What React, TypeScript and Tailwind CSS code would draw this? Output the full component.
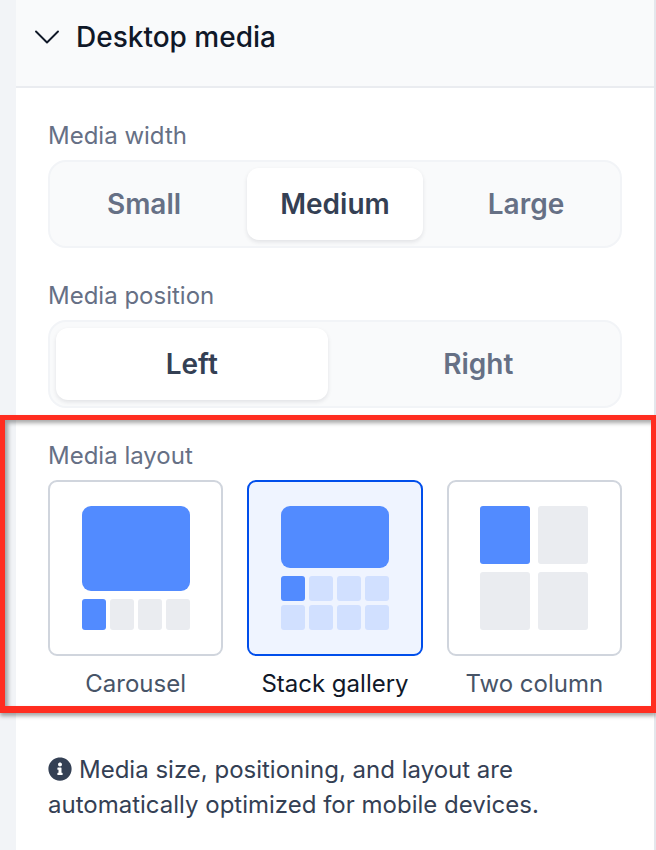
import { ChevronDown } from "lucide-react";
import { FaInfoCircle } from "react-icons/fa";

function Segmented({ options, active }: { options: string[]; active: string }) {
  return (
    <div className="flex h-[88px] gap-[15px] rounded-[18px] border-2 border-[#f2f4f7] bg-[#f9fafb] p-[6px]">
      {options.map((option) => (
        <div
          key={option}
          className={
            option === active
              ? "flex flex-1 items-center justify-center rounded-[12px] bg-white text-[28px] font-semibold text-[#344054] shadow-[0_2px_4px_rgba(16,24,40,0.1)]"
              : "flex flex-1 items-center justify-center text-[28px] font-semibold text-[#667085]"
          }
        >
          {option}
        </div>
      ))}
    </div>
  );
}

function Label({ children }: { children: React.ReactNode }) {
  return <div className="mb-2 h-8 text-[24px] leading-8 text-[#667085]">{children}</div>;
}

function Thumbs({ count, light, className }: { count: number; light: boolean; className: string }) {
  return (
    <div className={`grid grid-cols-4 gap-1 ${className}`}>
      {Array.from({ length: count }).map((_, i) => (
        <div
          key={i}
          className={
            i === 0
              ? "rounded-[3px] bg-[#528bff]"
              : light
                ? "rounded-[3px] bg-[#d1e0ff]"
                : "rounded-[3px] bg-[#eaecf0]"
          }
        />
      ))}
    </div>
  );
}

function LayoutCard({
  title,
  selected,
  children,
}: {
  title: string;
  selected?: boolean;
  children: React.ReactNode;
}) {
  return (
    <div className="flex flex-col items-center">
      <div
        className={
          selected
            ? "flex h-[176px] w-full items-center justify-center rounded-[9px] border-2 border-[#004eeb] bg-[#eff4ff]"
            : "flex h-[176px] w-full items-center justify-center rounded-[9px] border-2 border-[#d0d5dd] bg-white"
        }
      >
        {children}
      </div>
      <div
        className={
          selected
            ? "mt-3 h-8 text-[24px] leading-8 text-[#101828]"
            : "mt-3 h-8 text-[24px] leading-8 text-[#475467]"
        }
      >
        {title}
      </div>
    </div>
  );
}

export default function App() {
  return (
    <div className="relative h-[850px] w-[656px] overflow-hidden bg-[#f2f4f7] pl-4 font-['Inter',sans-serif]">
      <div className="h-full border-r-2 border-[#e4e7ec] bg-white">
        {/* Section header */}
        <div className="flex h-[88px] items-center gap-[7px] border-b-2 border-[#eaecf0] bg-[#f9fafb] pb-[12px] pl-[9px]">
          <ChevronDown className="h-[44px] w-[44px] text-[#101828]" strokeWidth={1.05} />
          <span className="text-[28px] font-medium text-[#101828]">Desktop media</span>
        </div>

        <div className="px-8 pt-8">
          <Label>Media width</Label>
          <Segmented options={["Small", "Medium", "Large"]} active="Medium" />

          <div className="mt-8">
            <Label>Media position</Label>
            <Segmented options={["Left", "Right"]} active="Left" />
          </div>

          <div className="mt-8">
            <Label>Media layout</Label>
            <div className="grid grid-cols-3 gap-6">
              <LayoutCard title="Carousel">
                <div className="flex w-[108px] flex-col gap-2">
                  <div className="h-[85px] rounded-[9px] bg-[#528bff]" />
                  <Thumbs count={4} light={false} className="h-[31px]" />
                </div>
              </LayoutCard>

              <LayoutCard title="Stack gallery" selected>
                <div className="flex w-[108px] flex-col gap-2">
                  <div className="h-[62px] rounded-[9px] bg-[#528bff]" />
                  <Thumbs count={8} light className="h-[54px]" />
                </div>
              </LayoutCard>

              <LayoutCard title="Two column">
                <div className="grid h-[124px] w-[108px] grid-cols-2 grid-rows-[58px_58px] gap-2">
                  <div className="rounded-[3px] bg-[#528bff]" />
                  <div className="rounded-[3px] bg-[#eaecf0]" />
                  <div className="rounded-[3px] bg-[#eaecf0]" />
                  <div className="rounded-[3px] bg-[#eaecf0]" />
                </div>
              </LayoutCard>
            </div>
          </div>

          <p className="mt-[52px] text-[24px] leading-[35px] text-[#344054]">
            <FaInfoCircle className="mr-[7px] inline-block h-[24px] w-[24px] align-[-3px]" />
            Media size, positioning, and layout are automatically optimized for mobile devices.
          </p>
        </div>
      </div>

      {/* Red annotation box over the screenshot */}
      <div className="absolute left-0 top-[415px] h-[298px] w-[656px] border-[5px] border-b-[7px] border-[#ff2d20] shadow-[0_3px_4px_rgba(0,0,0,0.35),inset_3px_3px_4px_rgba(0,0,0,0.35)]" />
    </div>
  );
}
